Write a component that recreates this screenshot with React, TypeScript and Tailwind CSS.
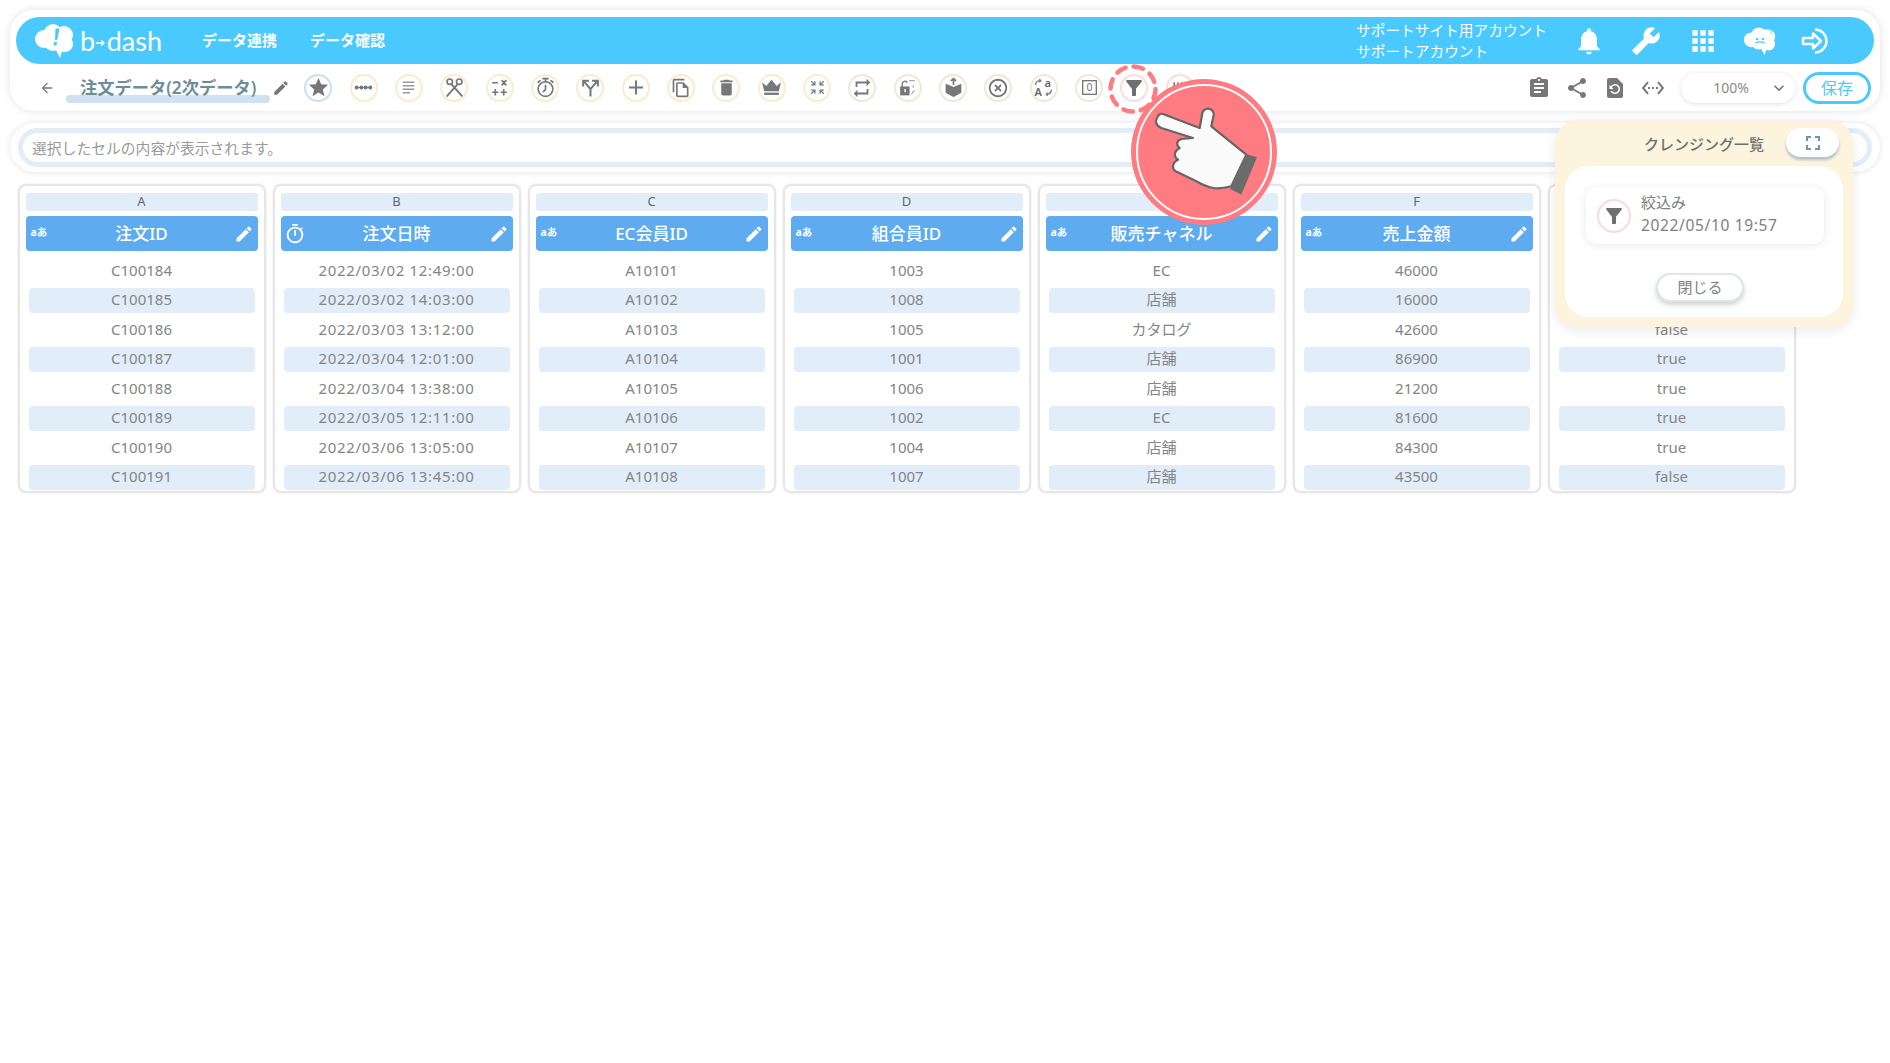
import type { ReactNode } from "react";
import {
  MdAdd,
  MdApps,
  MdArrowBack,
  MdAssignment,
  MdBuild,
  MdDelete,
  MdEdit,
  MdExpandMore,
  MdFilterAlt,
  MdFullscreen,
  MdHighlightOff,
  MdNotifications,
  MdOutlineFileCopy,
  MdOutlineTimer,
  MdRepeat,
  MdRestorePage,
  MdSettingsEthernet,
  MdShare,
  MdStar,
} from "react-icons/md";

const FONT = { fontFamily: '"Noto Sans", "Noto Sans CJK JP", sans-serif' };

function Svg({ children }: { children: ReactNode }) {
  return (
    <svg viewBox="0 0 20 20" className="h-[21px] w-[21px] overflow-visible" fill="none" stroke="#777" strokeWidth={1.6} strokeLinecap="round" strokeLinejoin="round">
      {children}
    </svg>
  );
}

const tools: { ring: string; icon: ReactNode }[] = [
  { ring: "border-[#cbdff2]", icon: <MdStar className="h-[23px] w-[23px] text-[#777]" /> },
  {
    ring: "border-[#fbeccb]",
    icon: (
      <Svg>
        <path d="M3 10h14" strokeWidth={1} />
        <circle cx="3.500" cy="10" r="1.900" fill="#777" stroke="none" />
        <circle cx="8" cy="10" r="1.900" fill="#777" stroke="none" />
        <circle cx="12" cy="10" r="1.900" fill="#777" stroke="none" />
        <circle cx="16.500" cy="10" r="1.900" fill="#777" stroke="none" />
      </Svg>
    ),
  },
  {
    ring: "border-[#fbeccb]",
    icon: (
      <Svg>
        <path d="M4.500 5h11M4.500 8.300h11M4.500 11.600h11M4.500 15h7" stroke="#999" strokeWidth={1.400} strokeLinecap="butt" />
      </Svg>
    ),
  },
  {
    ring: "border-[#fbeccb]",
    icon: (
      <Svg>
        <circle cx="5.500" cy="4.500" r="2.600" />
        <circle cx="14.500" cy="4.500" r="2.600" />
        <path d="M7 6.800 17 18M13 6.800 3 18" strokeWidth={1.800} />
      </Svg>
    ),
  },
  {
    ring: "border-[#fbeccb]",
    icon: (
      <Svg>
        <path d="M3 5.500h5.500M12 3l4.500 5M16.500 3 12 8M3 14.500h6M6 11.500v6M11 14.500h6M14 11.500v6" strokeLinecap="butt" />
      </Svg>
    ),
  },
  {
    ring: "border-[#fbeccb]",
    icon: (
      <Svg>
        <circle cx="10" cy="11.500" r="7" />
        <path d="M7.500 1.500h5M10 1.500v3M10 8v4l-2 2M3 5l1.800-1.500M17 5l-1.800-1.500" />
      </Svg>
    ),
  },
  {
    ring: "border-[#fbeccb]",
    icon: (
      <Svg>
        <path d="M10 18.500v-7L4 4.500M10 11.500l6-7M3 9V3.500h5.500M11.500 3.500H17V9" strokeWidth={1.900} strokeLinecap="butt" strokeLinejoin="miter" />
      </Svg>
    ),
  },
  { ring: "border-[#fbeccb]", icon: <MdAdd className="h-[25px] w-[25px] text-[#777]" /> },
  { ring: "border-[#fbeccb]", icon: <MdOutlineFileCopy className="h-[20px] w-[20px] text-[#777]" /> },
  { ring: "border-[#fbeccb]", icon: <MdDelete className="h-[21px] w-[21px] text-[#777]" /> },
  {
    ring: "border-[#fbeccb]",
    icon: (
      <Svg>
        <path d="M1 5l4 3.500L10 2.500l5 6L19 5l-2 8.500H3z" fill="#777" stroke="none" />
        <path d="M3 16h14" strokeWidth={2.200} strokeLinecap="butt" />
      </Svg>
    ),
  },
  {
    ring: "border-[#fbeccb]",
    icon: (
      <Svg>
        <path d="M4 4l3 3M7.500 4v3.500H4M16 4l-3 3M12.500 4v3.500H16M4 16l3-3M7.500 16v-3.500H4M16 16l-3-3M12.500 16v-3.500H16" strokeWidth={1.200} strokeLinecap="butt" strokeLinejoin="miter" />
      </Svg>
    ),
  },
  { ring: "border-[#e8ecd8]", icon: <MdRepeat className="h-[22px] w-[22px] text-[#777]" /> },
  {
    ring: "border-[#e8ecd8]",
    icon: (
      <Svg>
        <rect x="3" y="9" width="9" height="8.500" fill="#777" stroke="none" />
        <path d="M5 9V6.500a2.500 2.500 0 0 1 4.500-1.500" strokeWidth={1.300} />
        <path d="M12 3.500h4.500M15.500 8v2M16.500 13l-2.500 3" stroke="#aaa" strokeWidth={1.100} />
        <rect x="7" y="11.500" width="1.400" height="3" fill="#fff" stroke="none" />
      </Svg>
    ),
  },
  {
    ring: "border-[#e8ecd8]",
    icon: (
      <Svg>
        <path d="M10 9.500 17.500 6.500V15L10 19 2.500 15V6.500z" fill="#777" stroke="none" />
        <path d="M10 7.500V1.500M7.500 3.800 10 1.500l2.500 2.300" strokeWidth={1.600} strokeLinecap="butt" strokeLinejoin="miter" />
      </Svg>
    ),
  },
  { ring: "border-[#e8ecd8]", icon: <MdHighlightOff className="h-[22px] w-[22px] text-[#777]" /> },
  {
    ring: "border-[#e8ecd8]",
    icon: (
      <Svg>
        <text x="1.500" y="18" fontSize="10.500" fontWeight={600} fill="#666" stroke="none" style={FONT}>A</text>
        <text x="11" y="9.500" fontSize="10.500" fontWeight={600} fill="#666" stroke="none" style={FONT}>a</text>
        <path d="M2.500 7.500c0-3 2-4 5-4M6 2l1.500 1.500L6 5M17.500 12c0 3-2 4.500-5 4.500M14 15l-1.500 1.500L14 18" strokeWidth={1.200} strokeLinecap="butt" />
      </Svg>
    ),
  },
  {
    ring: "border-[#e8ecd8]",
    icon: (
      <Svg>
        <rect x="3.500" y="3.500" width="13" height="13" strokeWidth={1.300} strokeLinejoin="miter" />
        <text x="10" y="13.800" textAnchor="middle" fontSize="10" fill="#777" stroke="none" style={FONT}>0</text>
      </Svg>
    ),
  },
  { ring: "border-[#fcdcdc]", icon: <MdFilterAlt className="h-[24px] w-[24px] text-[#6f6f6f]" /> },
  {
    ring: "border-[#fcdcdc]",
    icon: (
      <Svg>
        <path d="M5 5v4M8.500 5v4M12 5v4M15.500 5v4M3 9h14" strokeWidth={1.500} strokeLinecap="butt" />
      </Svg>
    ),
  },
];

type Col = { letter: string; name: string; kind: "text" | "time"; wide?: boolean; rows: string[] };

const columns: Col[] = [
  { letter: "A", name: "注文ID", kind: "text", rows: ["C100184", "C100185", "C100186", "C100187", "C100188", "C100189", "C100190", "C100191"] },
  {
    letter: "B",
    name: "注文日時",
    kind: "time",
    wide: true,
    rows: [
      "2022/03/02 12:49:00",
      "2022/03/02 14:03:00",
      "2022/03/03 13:12:00",
      "2022/03/04 12:01:00",
      "2022/03/04 13:38:00",
      "2022/03/05 12:11:00",
      "2022/03/06 13:05:00",
      "2022/03/06 13:45:00",
    ],
  },
  { letter: "C", name: "EC会員ID", kind: "text", rows: ["A10101", "A10102", "A10103", "A10104", "A10105", "A10106", "A10107", "A10108"] },
  { letter: "D", name: "組合員ID", kind: "text", rows: ["1003", "1008", "1005", "1001", "1006", "1002", "1004", "1007"] },
  { letter: "E", name: "販売チャネル", kind: "text", rows: ["EC", "店舗", "カタログ", "店舗", "店舗", "EC", "店舗", "店舗"] },
  { letter: "F", name: "売上金額", kind: "text", rows: ["46000", "16000", "42600", "86900", "21200", "81600", "84300", "43500"] },
  { letter: "G", name: "会員フラグ", kind: "text", rows: ["true", "true", "false", "true", "true", "true", "true", "false"] },
];

function CloudMark({ face }: { face?: boolean }) {
  return (
    <svg viewBox="0 0 39 35" className="h-full w-full" fill="#fff">
      <circle cx="9" cy="16" r="9" />
      <circle cx="18" cy="10" r="9" />
      <circle cx="29" cy="12" r="9" />
      <circle cx="30" cy="21" r="8" />
      <circle cx="18" cy="19" r="9" />
      <polygon points="20,25 28,25 25,35" />
      {face ? (
        <>
          <circle cx="16" cy="15" r="1.600" fill="#4ac9ff" />
          <circle cx="23" cy="15" r="1.600" fill="#4ac9ff" />
          <path d="M14 20q5-3 11 0" stroke="#4ac9ff" strokeWidth={1.600} fill="none" />
          <path d="M26 2l9 4-3 3" stroke="#4ac9ff" strokeWidth={1} fill="none" />
        </>
      ) : (
        <path d="M20.500 5.500h4l-2.300 11.500h-2.200zM19 19h3l-.5 3.500h-3z" fill="#4ac9ff" />
      )}
    </svg>
  );
}

function HandOverlay() {
  return (
    <svg viewBox="0 0 146 146" className="absolute left-[1131px] top-[79px] h-[146px] w-[146px]">
      <circle cx="73" cy="73" r="73" fill="#ff7b82" />
      <circle cx="73" cy="73" r="67" fill="none" stroke="#fff" strokeWidth={2} />
      <path
        d="M32 35 68.700 49 71 36C71 32 74 29.700 77 29.700 81 29.700 83 33 82.700 36L80.300 47.300 115.300 75.700 100.300 107.300C94 109 88 110 82 109 76 108 70 105 65.300 102.300L44.700 92.300C41 90 40.500 84 47 80.700 43 78 42 73 48.700 69 45 66 45 62 50.300 60L62 59 30.300 49C25 47 24 42 26 39 27 36 29 34 32 35Z"
        fill="#fafafa"
        stroke="#666"
        strokeWidth={2.200}
        strokeLinejoin="round"
      />
      <polygon points="115.300,75 126,78.300 110.300,115.700 99.300,110" fill="#6b6b6b" />
    </svg>
  );
}

function DashedRing() {
  return (
    <svg viewBox="0 0 50 50" className="absolute left-[1108px] top-[64px] h-[50px] w-[50px]" fill="none">
      <circle cx="25" cy="25" r="22.500" stroke="#ff7b82" strokeWidth={4.500} strokeLinecap="round" strokeDasharray="9.500 8.167" />
    </svg>
  );
}

function CleansingPanel() {
  return (
    <div className="absolute left-[1555px] top-[121px] flex h-[206px] w-[298px] flex-col rounded-[22px] bg-[#fdf4de] px-[10px] pb-[10px] shadow-[0_4px_12px_rgba(0,0,0,0.08)]">
      <div className="relative flex h-[45px] shrink-0 items-center justify-center pt-[2px]">
        <span className="text-[15px] font-medium text-[#707070]">クレンジング一覧</span>
        <button className="absolute right-[4px] top-[7px] flex h-[29px] w-[53px] items-center justify-center rounded-full bg-white shadow-[0_3px_3px_rgba(120,160,180,0.6)]">
          <MdFullscreen className="h-[24px] w-[24px] text-[#6d98a8]" />
        </button>
      </div>
      <div className="flex flex-1 flex-col rounded-[24px] bg-white px-[21px] pt-[21px]">
        <div className="flex h-[57px] w-[238px] items-center rounded-[10px] bg-white pl-[11px] shadow-[0_1px_8px_rgba(0,0,0,0.09)]">
          <div className="flex h-[34px] w-[34px] items-center justify-center rounded-full border-2 border-[#fbd9d9]">
            <MdFilterAlt className="h-[24px] w-[24px] text-[#6f6f6f]" />
          </div>
          <div className="ml-[10px] pb-[3px] leading-[23px] text-[#808080]">
            <div className="text-[15px]">絞込み</div>
            <div className="text-[15.500px] tracking-[0.65px]">2022/05/10 19:57</div>
          </div>
        </div>
        <button className="ml-[70px] mt-[29px] h-[29px] w-[88px] rounded-full border-2 border-[#dde6ea] bg-white text-[15px] text-[#808080] shadow-[0_3px_5px_rgba(0,0,0,0.18)]">
          閉じる
        </button>
      </div>
    </div>
  );
}

function Column({ col }: { col: Col }) {
  return (
    <div className="h-[309px] w-[248px] shrink-0 rounded-[8px] border-2 border-[#e6e6e6] px-[6px] pt-[7px] shadow-[0_0_2px_rgba(0,0,0,0.12)]">
      <div className="flex h-[18px] items-center justify-center rounded-[3px] bg-[#e1eef9] text-[13px] text-[#666]">{col.letter}</div>
      <div className="relative mt-[5px] flex h-[35px] items-center justify-center rounded-[4px] bg-[#5eabf0] text-[17px] font-medium text-white">
        {col.kind === "time" ? (
          <MdOutlineTimer className="absolute left-[3px] h-[22px] w-[22px]" />
        ) : (
          <span className="absolute left-[5px] top-[9px] text-[10.500px] font-bold leading-[14px]">aあ</span>
        )}
        {col.name}
        <MdEdit className="absolute right-[4px] h-[20px] w-[20px]" />
      </div>
      <div className="mx-[3px] mt-[7px] flex flex-col gap-[4.500px]">
        {col.rows.map((v, i) => (
          <div
            key={i}
            className={`flex h-[25px] items-center justify-center rounded-[4px] pb-[1px] text-[15px] text-[#858585] ${col.wide ? "tracking-[0.68px]" : ""} ${i % 2 === 1 ? "bg-[#e1eef9]" : ""}`}
          >
            {v}
          </div>
        ))}
      </div>
    </div>
  );
}

export default function App() {
  return (
    <div className="relative h-[1063px] w-[1890px] overflow-hidden bg-white" style={FONT}>
      {/* ヘッダー + ツールバー */}
      <div className="mx-[10px] mt-[10px] h-[101px] rounded-[24px] bg-white px-[6px] pt-[7px] shadow-[0_0_8px_rgba(0,0,0,0.12)]">
        <div className="flex h-[47px] items-center rounded-full bg-[#4ac9ff] pl-[19px] pr-[41px] text-white">
          <div className="h-[35px] w-[39px] shrink-0">
            <CloudMark />
          </div>
          <div className="ml-[6px] flex w-[82px] shrink-0 items-center text-[27px] leading-none" style={{ fontFamily: "Lato, sans-serif" }}>
            b
            <svg viewBox="0 0 12 10" className="mx-[1px] mt-[4px] h-[10px] w-[12px]" fill="none" stroke="#fff" strokeWidth={1.800}>
              <path d="M0 5h10M6.500 1.500 10 5 6.500 8.500" />
            </svg>
            dash
          </div>
          <nav className="ml-[40px] flex gap-[33px] text-[15px] font-bold">
            <span>データ連携</span>
            <span>データ確認</span>
          </nav>
          <div className="ml-auto mr-[26px] w-[191px] whitespace-nowrap text-[14.700px] leading-[21px]">
            <div>サポートサイト用アカウント</div>
            <div>サポートアカウント</div>
          </div>
          <div className="flex items-center gap-[25px]">
            <MdNotifications className="h-[32px] w-[32px]" />
            <MdBuild className="h-[30px] w-[32px] -scale-x-100" />
            <MdApps className="h-[34px] w-[32px]" />
            <div className="h-[30px] w-[32px]">
              <CloudMark face />
            </div>
            <svg viewBox="0 0 32 28" className="h-[28px] w-[32px]" fill="none" stroke="#fff" strokeWidth={2.400}>
              <path d="M14 2.500a11.500 11.500 0 1 1 0 23" />
              <path d="M2 11h10V6.500L20 14l-8 7.500V17H2z" strokeLinejoin="round" />
            </svg>
          </div>
        </div>
        <div className="flex h-[47px] items-center pl-[23px] pr-[2px] text-[#777]">
          <MdArrowBack className="h-[16px] w-[16px] shrink-0" />
          <div className="relative ml-[11px] shrink-0 whitespace-nowrap px-[14px] text-[17.250px] font-semibold text-[#6c8d99]">
            <span className="absolute bottom-[-3px] left-0 right-0 h-[8px] rounded-full bg-[#d0e1f1]" />
            <span className="relative">注文データ(2次データ)</span>
          </div>
          <MdEdit className="ml-[2px] h-[18px] w-[18px] shrink-0" />
          <div className="ml-[14px] flex gap-[17.350px]">
            {tools.map((t, i) => (
              <div key={i} className={`flex h-[28px] w-[28px] items-center justify-center rounded-full border-2 ${t.ring}`}>
                {t.icon}
              </div>
            ))}
          </div>
          <div className="ml-auto flex items-center gap-[14px]">
            <MdAssignment className="h-[24px] w-[24px]" />
            <MdShare className="h-[24px] w-[24px]" />
            <MdRestorePage className="h-[24px] w-[24px]" />
            <MdSettingsEthernet className="h-[24px] w-[24px]" />
          </div>
          <div className="relative ml-[16px] flex h-[30px] w-[114px] items-center justify-center rounded-full bg-white pr-[14px] text-[14px] text-[#8a8a8a] shadow-[0_1px_5px_rgba(0,0,0,0.12)]">
            100%
            <MdExpandMore className="absolute right-[6px] h-[20px] w-[20px] text-[#777]" />
          </div>
          <button className="ml-[8px] mr-[1px] h-[32px] w-[68px] rounded-full border-[3px] border-[#4ac9ff] bg-white text-[16px] text-[#4ac9ff]">保存</button>
        </div>
      </div>

      {/* セル内容 */}
      <div className="mx-[10px] mt-[12px] h-[49px] rounded-full bg-white px-[8px] py-[5px] shadow-[0_0_6px_rgba(0,0,0,0.12)]">
        <div className="flex h-[39px] items-center rounded-full border-[5px] border-[#e1eef9] pl-[9px] pt-[1px] text-[14.800px] text-[#9a9a9a]">
          選択したセルの内容が表示されます。
        </div>
      </div>

      {/* データ列 */}
      <div className="ml-[17.500px] mt-[12px] flex gap-[7px]">
        {columns.map((c) => (
          <Column key={c.letter} col={c} />
        ))}
      </div>

      <DashedRing />
      <HandOverlay />
      <CleansingPanel />
    </div>
  );
}
